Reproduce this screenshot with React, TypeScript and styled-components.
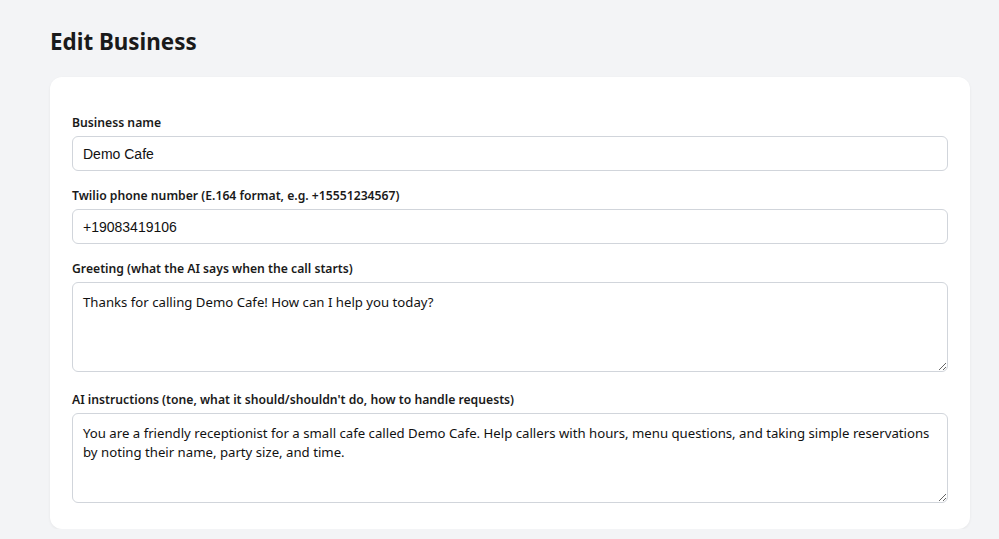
import * as React from 'react';
import styled, {createGlobalStyle} from 'styled-components';

const GlobalStyle = createGlobalStyle`
    html, body {
        margin: 0;
        background: #f3f4f6;
    }

    body {
        font-family: "Noto Sans", "Open Sans", sans-serif;
        color: #111827;
    }
`;

/**
 * Page frame and card
 */
const Page = styled.main`
    width: 920px;
    padding: 25px 0 0 50px;
`;

const Heading = styled.h1`
    margin: 0 0 18px;
    font-size: 22.4px;
    line-height: 34px;
    font-weight: 700;
    color: #1a1a1a;
`;

const Card = styled.form`
    display: flex;
    flex-direction: column;
    gap: 16px;
    background: #fff;
    border-radius: 12px;
    box-shadow: 0 1px 3px rgba(0, 0, 0, 0.06);
    padding: 37px 22px 23px;
`;

const Field = styled.div`
    display: flex;
    flex-direction: column;
`;

const Label = styled.label`
    display: block;
    font-size: 12.2px;
    line-height: 18px;
    font-weight: 600;
    color: #1a1a1a;
    margin-bottom: 4px;
`;

const TextInput = styled.input`
    display: block;
    box-sizing: border-box;
    width: 100%;
    height: 35px;
    padding: 0 10px;
    border: 1px solid #d1d5db;
    border-radius: 6px;
    font-family: "Liberation Sans", Arial, sans-serif;
    font-size: 14px;
    color: #111;
    background: #fff;
`;

const TextArea = styled.textarea`
    display: block;
    box-sizing: border-box;
    width: 100%;
    height: 90px;
    padding: 10px 10px 8px;
    border: 1px solid #d1d5db;
    border-radius: 6px;
    font-family: "Noto Sans", "Open Sans", sans-serif;
    font-size: 13.2px;
    line-height: 19px;
    color: #111;
    background: #fff;
    resize: vertical;
    margin-bottom: 3px;
`;

export default function App() {
    return (
        <>
            <GlobalStyle />
            <Page>
                <Heading>Edit Business</Heading>
                <Card onSubmit={(e) => e.preventDefault()}>

                    <Field>
                        <Label htmlFor="name">Business name</Label>
                        <TextInput id="name" defaultValue="Demo Cafe" />
                    </Field>

                    <Field>
                        <Label htmlFor="phone">Twilio phone number (E.164 format, e.g. +15551234567)</Label>
                        <TextInput id="phone" defaultValue="+19083419106" />
                    </Field>

                    <Field>
                        <Label htmlFor="greeting">Greeting (what the AI says when the call starts)</Label>
                        <TextArea
                            id="greeting"
                            defaultValue="Thanks for calling Demo Cafe! How can I help you today?"
                        />
                    </Field>

                    <Field>
                        <Label htmlFor="instructions">AI instructions (tone, what it should/shouldn't do, how to handle requests)</Label>
                        <TextArea
                            id="instructions"
                            defaultValue="You are a friendly receptionist for a small cafe called Demo Cafe. Help callers with hours, menu questions, and taking simple reservations by noting their name, party size, and time."
                        />
                    </Field>

                </Card>
            </Page>
        </>
    );
}
